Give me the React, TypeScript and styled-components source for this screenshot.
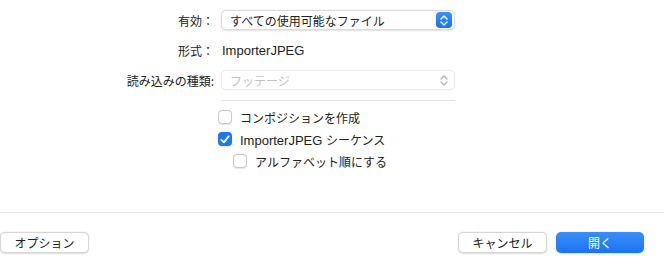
import React from 'react'
import styled, { createGlobalStyle } from 'styled-components'

const Global = createGlobalStyle`
  html, body {
    margin: 0;
    padding: 0;
    background: #ffffff;
  }
  body {
    font-family: "Liberation Sans", "Noto Sans CJK JP", sans-serif;
    font-size: 13px;
    color: #222222;
    -webkit-font-smoothing: antialiased;
  }
`

const Stepper = ({ disabled }: { disabled?: boolean }) => (
  <StepBox $disabled={disabled}>
    <svg width="8" height="11" viewBox="0 0 8 11" fill="none">
      <path
        d="M1 4 L4 1 L7 4 M1 7 L4 10 L7 7"
        stroke={disabled ? '#b4b4b4' : '#ffffff'}
        strokeWidth="1.4"
        strokeLinecap="round"
        strokeLinejoin="round"
      />
    </svg>
  </StepBox>
)

const Check = ({ checked, indent }: { checked?: boolean; indent?: boolean }) => (
  <Box $checked={checked} $indent={indent}>
    {checked && (
      <svg width="10" height="9" viewBox="0 0 10 9" fill="none">
        <path d="M1.3 4.8 L3.9 7.4 L8.7 1.4" stroke="#fff" strokeWidth="1.8" strokeLinecap="round" strokeLinejoin="round" />
      </svg>
    )}
  </Box>
)

const App = () => {
  return (
    <Page>
      <Global />
      <Form>
        <Label><J>有効：</J></Label>
        <Popup>
          <J>すべての使用可能なファイル</J>
          <Stepper />
        </Popup>
        <Label><J>形式：</J></Label>
        <Value>ImporterJPEG</Value>
        <Label><J>読み込みの種類:</J></Label>
        <Popup $disabled>
          <J>フッテージ</J>
          <Stepper disabled />
        </Popup>
        <Spacer />
        <Options>
          <Rule />
          <CheckRow>
            <Check />
            <J>コンポジションを作成</J>
          </CheckRow>
          <CheckRow>
            <Check checked />
            <span>ImporterJPEG <J>シーケンス</J></span>
          </CheckRow>
          <CheckRow>
            <Check indent />
            <J>アルファベット順にする</J>
          </CheckRow>
        </Options>
      </Form>
      <Footer>
        <Button $w={89}><J>オプション</J></Button>
        <Grow />
        <Button $w={89}><J>キャンセル</J></Button>
        <Button $w={88} $primary><J>開く</J></Button>
      </Footer>
    </Page>
  )
}

export default App

const Page = styled.div`
  width: 664px;
  height: 268px;
  overflow: hidden;
  display: flex;
  flex-direction: column;
`
const J = styled.span`
  font-family: "Noto Sans CJK JP", sans-serif;
  font-size: 12px;
`
const Form = styled.div`
  display: grid;
  grid-template-columns: 214px 234px;
  grid-template-rows: 20px 40px 20px auto;
  column-gap: 7px;
  padding-top: 10px;
  align-items: center;
  height: 212px;
  flex-shrink: 0;
  box-sizing: border-box;
`
const Label = styled.div`
  text-align: right;
  white-space: nowrap;
`
const Value = styled.div`
  padding-left: 1px;
`
const Popup = styled.div<{ $disabled?: boolean }>`
  height: 20px;
  box-sizing: border-box;
  display: flex;
  align-items: center;
  justify-content: space-between;
  padding: 0 2px 0 8px;
  border-radius: 5px;
  background: #fff;
  border: 0.5px solid ${p => (p.$disabled ? '#ececec' : '#dcdcdc')};
  box-shadow: ${p => (p.$disabled ? '0 0.5px 1px rgba(0,0,0,0.04)' : '0 0.5px 1.5px rgba(0,0,0,0.12)')};
  color: ${p => (p.$disabled ? '#c2c2c2' : '#222222')};
`
const StepBox = styled.div<{ $disabled?: boolean }>`
  width: 16px;
  height: 16px;
  border-radius: 4px;
  display: flex;
  align-items: center;
  justify-content: center;
  background: ${p => (p.$disabled ? 'transparent' : 'linear-gradient(#3d8ff8, #1a72ee)')};
`
const Spacer = styled.div``
const Options = styled.div`
  align-self: start;
  display: flex;
  flex-direction: column;
  padding-top: 10px;
`
const Rule = styled.div`
  height: 1px;
  background: #e4e4e4;
  margin-bottom: 5px;
`
const CheckRow = styled.div`
  height: 22px;
  display: flex;
  align-items: center;
  gap: 8px;
  margin-left: -3px;
  white-space: nowrap;
`
const Box = styled.div<{ $checked?: boolean; $indent?: boolean }>`
  width: 14px;
  height: 14px;
  box-sizing: border-box;
  border-radius: 4px;
  margin-left: ${p => (p.$indent ? '15px' : '0')};
  display: flex;
  align-items: center;
  justify-content: center;
  background: ${p => (p.$checked ? '#1b78f2' : '#fff')};
  border: ${p => (p.$checked ? 'none' : '0.5px solid #c9c9c9')};
  box-shadow: 0 0.5px 1px rgba(0, 0, 0, 0.1);
`
const Footer = styled.div`
  border-top: 1px solid #e6e6e6;
  display: flex;
  align-items: flex-start;
  gap: 9px;
  padding: 19px 20px 0 0;
  flex: 1;
`
const Grow = styled.div`
  flex: 1;
`
const Button = styled.div<{ $w: number; $primary?: boolean }>`
  width: ${p => p.$w}px;
  height: 21px;
  box-sizing: border-box;
  border-radius: 5px;
  display: flex;
  align-items: center;
  justify-content: center;
  background: ${p => (p.$primary ? 'linear-gradient(#3c8ef8, #1a74f1)' : '#fff')};
  color: ${p => (p.$primary ? '#fff' : '#222222')};
  border: ${p => (p.$primary ? 'none' : '0.5px solid #d6d6d6')};
  box-shadow: 0 0.5px 1.5px rgba(0, 0, 0, 0.14);
`
